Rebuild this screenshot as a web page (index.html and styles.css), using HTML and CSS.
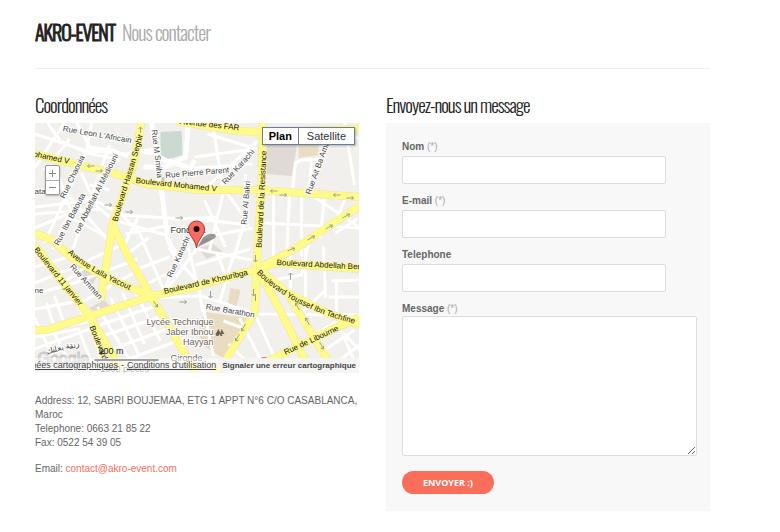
FILE: index.html
```html
<!DOCTYPE html>
<html lang="fr">
<head>
<meta charset="utf-8">
<meta name="viewport" content="width=device-width, initial-scale=1">
<title>AKRO-EVENT - Nous contacter</title>
<link rel="stylesheet" href="styles.css">
</head>
<body>
<header class="page-header">
  <h1><strong>AKRO-EVENT</strong><span>Nous contacter</span></h1>
</header>
<main class="columns">
  <section>
    <h2>Coordonnées</h2>
    <div class="map">
      <svg class="map-canvas" viewBox="35 123 325 250" preserveAspectRatio="xMidYMid slice" role="img" aria-label="Plan de Casablanca">
        <rect x="35" y="123" width="325" height="250" fill="#f2f0ec"/>
        <path fill="#dfdad4" d="M267 143h31l-6 33-25-2z"/>
        <path fill="#e9dcc3" d="M299 143h20v12l-20 3zM231 288l10 2-4 17-9-2zM205 312l44 6-9 24-16 16-17-10-8-13z"/>
        <path fill="#dfdad4" d="M77 264l22 10-9 15zM90 308l14-8 8 7-16 6zM199 248l15-4 9 8-16 7z"/>
        <path fill="#c6dfb1" d="M97 311l7-4 4 3-9 4z"/>
        <path fill="#f08178" d="M262 357h12v3h-12z"/>
        <g class="street">
          <path d="M35 134l49 16 43 4 33-6M48 123l13 18 27 12 33 7M35 168l30-45M77 123l17 30M92 123l-5 28-42 92M70 139l-18 23M110 145L73 250M128 157l-14-7-26-3M35 207l59-7 30 15 57 4 37-2M82 173l14 32 14 12M44 168l68 76M35 214l66-5M57 170l14 40-18 39M35 228l31-13 42 22M90 185l20 5M85 197l20 8"/>
          <path class="broad" d="M152 123l5 30 6 45 5 40 10 24M137 151l20 2 8 7 26 8 4-8M189 123l-3 34-20 10h-22"/>
          <path d="M195 157l60-8M213 123l5 32 5 32M206 188l52-47M195 168l58-4M208 134l49 15M223 187l24 33M246 174l1 41-13 44M205 200l21 47M197 219l53 6M224 192l-14 58M195 239l58-11M265 223l95 5M274 190v75M290 195l-3 65M302 194v62M293 190l3-27 6-3 22-1 2-16M312 158l-2 36M312 195l46 31M325 194l-4 44M345 123l10 62M337 126l22 13M347 195l-12 30M358 219l-22 14"/>
          <path d="M118 221l48 14 12 20-14 38M126 234l40-8M116 208l24 25 25 59M138 218l-15 31M149 238l-20 15M133 271l37-14M145 285l28-14M150 298l52-2 55 18 103 1M166 291l31-42 55 11M169 248l30 36 4 28M187 240l10 41 11 6M196 265l55-16M217 252l12 31M234 254l-14 49M203 304l11 52"/>
          <path d="M35 283l30-12 55-25M35 294l40-11 63-24M35 309l51-9 50-28M35 267l31-9M63 283l29-20M55 296l11 31M71 291l15 30M47 303l8 25M35 318l20 42M35 337l44-8 17 44M53 330l22 43M66 326l26-5 11 51M98 307l40 66M111 298l29 58M123 293l22 51M133 287l28 54M103 324l56-19M106 335l60-20M113 349l60-22M124 361l62-23M35 349l80-29"/>
          <path d="M255 313l27 60M240 318l28 55M229 344l30 29M246 329l-22-8M263 282l39-7 7-30M291 251v45M306 248v57M324 246l2 52M329 297h31M337 281v38M360 280l-28 1M309 338l39-23M319 354l36-24M330 368l30-23M336 325l24 25M302 313l25-24M343 334l17 38"/>
        </g>
        <path fill="#cbd9d3" d="M161 132l21-1 1 24-14 4-8-4z"/>
        <path fill="#b9d3a4" d="M162 177h3v5h-3z"/>
        <path class="road-edge" d="M142 123l-8 42-21 60-12 75M113 225l16 32 23 40 19 32 25 44M35 154l45 11 33 8 34 11 53 6h58l102 7M177 121l61 10 24 1 98-3M263 123l-1 62-5 85-2 43-30 49-9 11M360 206l-65 43-37 20-63 18-42 9-63 20-43 14H35M35 233l17 7 21 18 34 20 45 18M35 245l28 37 27 34 23 39 9 18M258 268l20-5 82 6M258 268l30 25 40 20 32 12M260 273l18 32 34 68M288 293l48 80M267 362l52-26 41-19"/>
        <path class="road" d="M142 123l-8 42-21 60-12 75M113 225l16 32 23 40 19 32 25 44M35 154l45 11 33 8 34 11 53 6h58l102 7M177 121l61 10 24 1 98-3M263 123l-1 62-5 85-2 43-30 49-9 11M360 206l-65 43-37 20-63 18-42 9-63 20-43 14H35M35 233l17 7 21 18 34 20 45 18M35 245l28 37 27 34 23 39 9 18M258 268l20-5 82 6M258 268l30 25 40 20 32 12M260 273l18 32 34 68M288 293l48 80M267 362l52-26 41-19"/>
        <g class="arrows">
          <path d="M88 166h7m-7 0l2-2m-2 2l2 2M96 171h7m0 0l-2-2m2 2l-2 2M271 191h7m-7 0l2-2m-2 2l2 2M280 195h7m0 0l-2-2m2 2l-2 2M334 195h7m-7 0l2-2m-2 2l2 2M347 198h7m0 0l-2-2m2 2l-2 2M105 205h7m0 0l-2-2m2 2l-2 2M126 212h7m0 0l-2-2m2 2l-2 2M176 218h7m0 0l-2-2m2 2l-2 2M141 133v-6m0 0l-2 2m2-2l2 2"/>
          <path d="M308 240l7-4m0 0h-3m3 0l-1 3M326 229l7-4m0 0h-3m3 0l-1 3M343 218l7-4m0 0h-3m3 0l-1 3M288 251l7-3m0 0h-3m3 0l-1 3M256 255v7m0 0l-2-2m2 2l2-2M254 289v7m0 0l-2-2m2 2l2-2M256 301v-7M246 324l-4 7m0 0v-3m0 3l3-1M240 334l-4 7m0 0v-3m0 3l3-1M296 303l4 7m-4-7v3m0-3l3 1M306 318l4 7m-4-7v3m0-3l3 1M320 342l4 7m0 0v-3m0 3l-3-1M154 301l4 6m0 0v-3m0 3l-3-1M291 280v-7m0 0l-2 2m2-2l2 2M180 302h7m0 0l-2-2m2 2l-2 2M211 291v7m0 0l-2-2m2 2l2-2"/>
        </g>
        <defs>
          <path id="hassan" d="M118 222C126 190 138 160 145 128"/>
          <path id="yacout" d="M68 253C90 273 112 281 136 293"/>
          <path id="tachfine" d="M257 273C280 297 315 314 360 325"/>
          <path id="janvier" d="M34 250L80 307"/>
        </defs>
        <g class="road-name">
          <text><textPath href="#hassan">Boulevard Hassan Seghir</textPath></text>
          <text><textPath href="#yacout">Avenue Lalla Yacout</textPath></text>
          <text><textPath href="#tachfine">Boulevard Youssef Ibn Tachfine</textPath></text>
          <text><textPath href="#janvier">Boulevard 11 janvier</textPath></text>
          <text transform="translate(136 183) rotate(6)">Boulevard Mohamed V</text>
          <text transform="translate(27 155) rotate(12)">Mohamed V</text>
          <text transform="translate(180 124) rotate(6)">Avenue des FAR</text>
          <text transform="translate(262 248) rotate(-87)">Boulevard de la Resistance</text>
          <text transform="translate(165 294) rotate(-13)">Boulevard de Khouribga</text>
          <text transform="translate(277 265) rotate(3)">Boulevard Abdellah Ben</text>
          <text transform="translate(286 355) rotate(-25)">Rue de Libourne</text>
          <text transform="translate(90 327) rotate(68)">Boulevard</text>
        </g>
        <g class="street-name">
          <text transform="translate(63 131) rotate(10)">Rue Leon L'Africain</text>
          <text transform="translate(152 130) rotate(83)">Rue M Smiha</text>
          <text transform="translate(166 178) rotate(-5)">Rue Pierre Parent</text>
          <text transform="translate(226 185) rotate(-48)">Rue Karachi</text>
          <text transform="translate(172 278) rotate(-65)">Rue Karachi</text>
          <text transform="translate(247 225) rotate(-85)">Rue Al Bakri</text>
          <text transform="translate(311 195) rotate(-70)">Rue Ait Ba Amran</text>
          <text transform="translate(65 199) rotate(-64)">Rue Chaouia</text>
          <text transform="translate(59 246) rotate(-62)">Rue Ibn Batouta</text>
          <text transform="translate(79 234) rotate(-63)">rue Abdellah Al Médiouni</text>
          <text transform="translate(70 267) rotate(48)">Rue Amman</text>
          <text transform="translate(206 309) rotate(10)">Rue Barathon</text>
          <text transform="translate(47 354) rotate(-13)">زنقة بعلبك</text>
          <text x="35" y="194">ata</text>
          <text x="35" y="293">ne</text>
        </g>
        <g class="place">
          <text x="171" y="233" class="district">Fondouk</text>
          <text x="214" y="325" text-anchor="end">Lycée Technique</text>
          <text x="214" y="335" text-anchor="end">Jaber Ibnou</text>
          <text x="214" y="345" text-anchor="end">Hayyan</text>
          <text x="171" y="361">Gironde</text>
          <text x="101" y="372">1000 pièces</text>
        </g>
        <path d="M216 334l3-5 2 4 1-4 3 5h-3l1 2h-2l-1-2-1 2h-2z" fill="#6d6257"/>
        <text class="watermark" x="38" y="364">Google</text>
        <path d="M198 247l6-10q5-4 11-3 4 3-3 6z" fill="#333" opacity=".5"/>
        <path d="M197 248c-1-9-8-12-8-19a8 8 0 0 1 16 0c0 7-7 10-8 19z" fill="#fb6d64" stroke="#a53830"/>
        <circle cx="197" cy="229" r="3" fill="#181010"/>
        <text class="scale" x="99" y="354">200 m</text>
        <path d="M95 360h64" stroke="#444" stroke-width="2"/>
      </svg>
      <div class="zoom-buttons">
        <button type="button" aria-label="Zoom avant"><svg viewBox="0 0 9 9"><path d="M1 4.5h7M4.5 1v7"/></svg></button>
        <button type="button" aria-label="Zoom arrière"><svg viewBox="0 0 9 9"><path d="M1 4.5h7"/></svg></button>
      </div>
      <div class="map-types">
        <button type="button" class="active">Plan</button><button type="button">Satellite</button>
      </div>
      <div class="map-legal">
        <a href="#donnees">Données cartographiques</a><span>-</span><a href="#conditions">Conditions d'utilisation</a><a class="report" href="#signaler">Signaler une erreur cartographique</a>
      </div>
    </div>
    <address>
      <p>Address: 12, SABRI BOUJEMAA, ETG 1 APPT N°6 C/O CASABLANCA, Maroc<br>Telephone: 0663 21 85 22<br>Fax: 0522 54 39 05</p>
      <p>Email: <a href="mailto:contact@akro-event.com">contact@akro-event.com</a></p>
    </address>
  </section>
  <section>
    <h2>Envoyez-nous un message</h2>
    <form class="contact-form">
      <div class="field"><label for="nom">Nom <span>(*)</span></label><input id="nom" type="text" required></div>
      <div class="field"><label for="email">E-mail <span>(*)</span></label><input id="email" type="email" required></div>
      <div class="field"><label for="tel">Telephone</label><input id="tel" type="tel"></div>
      <div class="field message"><label for="message">Message <span>(*)</span></label><textarea id="message" required></textarea></div>
      <button class="submit" type="submit">ENVOYER :)</button>
    </form>
  </section>
</main>
</body>
</html>
```
FILE: styles.css
```css
* {
  box-sizing: border-box;
}

body {
  margin: 0;
  padding: 20px 70px 20px 35px;
  background: #fff;
  color: #666;
  font: 10px/14px "Liberation Sans", Arial, sans-serif;
}

h1,
h2 {
  margin: 0;
  color: #222;
  font-family: Oswald, "Liberation Sans Narrow", "Liberation Sans", sans-serif;
  font-weight: 300;
  letter-spacing: -1px;
}

h1 {
  display: flex;
  gap: 7px;
  font-size: 20px;
  line-height: 24px;
}

h1 strong {
  font-weight: 300;
  -webkit-text-stroke: 1px #222;
}

h1 span {
  color: #aaa;
}

h2 {
  margin-bottom: 8px;
  font-size: 19px;
  line-height: 22px;
}

.page-header {
  padding-bottom: 24px;
  margin-bottom: 24px;
  border-bottom: 1px solid #eee;
}

.columns {
  display: grid;
  grid-template-columns: 1fr 1fr;
  gap: 27px;
}

.map {
  position: relative;
  height: 250px;
  margin-bottom: 21px;
  overflow: hidden;
}

.map-canvas {
  display: block;
  width: 100%;
  height: 100%;
}

.street {
  fill: none;
  stroke: #fff;
  stroke-width: 3;
}

.broad {
  stroke-width: 5;
}

.road,
.road-edge {
  fill: none;
  stroke-linejoin: round;
}

.road-edge {
  stroke: #eee5a0;
  stroke-width: 8;
}

.road {
  stroke: #fffb8b;
  stroke-width: 7;
}

.arrows {
  fill: none;
  stroke: #98a09a;
}

.road-name {
  fill: #111;
  stroke: #fffb8b;
  stroke-width: 1;
  paint-order: stroke;
  font-size: 8px;
}

.street-name {
  fill: #444;
  stroke: #fff;
  stroke-width: 2;
  paint-order: stroke;
  font-size: 8px;
}

.place {
  fill: #6d6257;
  stroke: #fff;
  stroke-width: 2;
  paint-order: stroke;
  font-size: 9px;
}

.district {
  fill: #333;
}

.watermark {
  fill: #fff;
  stroke: #aaa;
  font-size: 16px;
  opacity: .6;
}

.scale {
  fill: #222;
  font-size: 9px;
}

.zoom-buttons {
  position: absolute;
  top: 42px;
  left: 10px;
  display: grid;
  border: 1px solid #999;
  border-radius: 2px;
  background: #fff;
  box-shadow: 0 1px 2px #0004;
}

.zoom-buttons button {
  display: grid;
  place-items: center;
  width: 13px;
  height: 14px;
  padding: 0;
  border: 0;
  background: none;
}

.zoom-buttons button + button {
  border-top: 1px solid #aaa;
}

.zoom-buttons svg {
  width: 9px;
  height: 9px;
  stroke: #888;
  stroke-width: 1;
}

.map-types {
  position: absolute;
  top: 4px;
  right: 4px;
  display: flex;
  border: 1px solid #6b7b99;
  background: #fff;
  box-shadow: 1px 1px 2px #0004;
}

.map-types button {
  padding: 0 8px;
  border: 0;
  background: none;
  color: #333;
  font: 11px/16px "Liberation Sans", Arial, sans-serif;
}

.map-types .active {
  padding: 0 6px;
  border-right: 1px solid #6b7b99;
  color: #000;
  font-weight: 700;
}

.map-legal {
  position: absolute;
  right: 0;
  bottom: 0;
  display: flex;
  gap: 3px;
  background: #ffffff80;
  color: #444;
  font-size: 9px;
  line-height: 15px;
  white-space: nowrap;
}

.map-legal a {
  color: #444;
}

.map-legal .report {
  padding: 0 3px;
  background: #f4f4f4e0;
  font-size: 8px;
  font-weight: 700;
  text-decoration: none;
}

address {
  font-style: normal;
}

address p {
  margin: 0 0 12px;
}

address a {
  color: #fc6e5c;
  text-decoration: none;
}

.contact-form {
  padding: 17px 13px 17px 16px;
  background: #f8f8f8;
}

.field {
  margin-bottom: 10px;
}

label {
  display: block;
  margin-bottom: 2px;
  font-weight: 700;
}

.message label {
  margin-bottom: 0;
}

label span {
  color: #aaa;
  font-weight: 400;
}

input,
textarea {
  display: block;
  border: 1px solid #ddd;
  border-radius: 2px;
  background: #fff;
  font: inherit;
}

input {
  width: 100%;
  max-width: 264px;
  height: 28px;
}

textarea {
  width: 100%;
  height: 140px;
  margin-bottom: 15px;
  resize: vertical;
}

.submit {
  display: block;
  height: 23px;
  padding: 0 21px;
  border: 0;
  border-radius: 12px;
  background: #fc6e5c;
  color: #fff;
  font: 700 9px/23px "Open Sans", sans-serif;
}
```
